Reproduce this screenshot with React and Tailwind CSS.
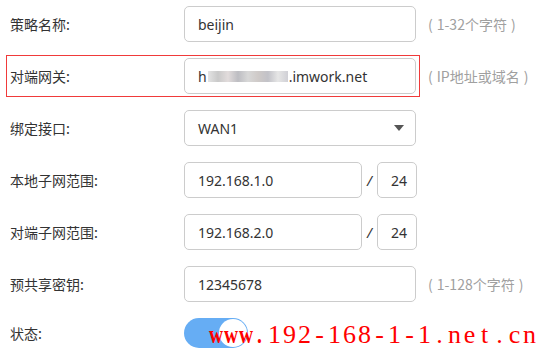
import React from 'react';

const labelCls = "w-[174px] shrink-0 text-[14px] text-[#333] font-['Noto_Sans_CJK_SC',sans-serif]";
const inputCls = "h-9 flex items-center border border-[#ccc] rounded-[5px] bg-white px-[13px] text-[14px] text-[#333] font-['Noto_Sans','Noto_Sans_CJK_SC',sans-serif]";

function Hint({ children, className = 'ml-3' }) {
  return (
    <span className={`${className} flex items-center text-[14px] text-[#a0a0a0] font-['Noto_Sans_CJK_SC',sans-serif]`}>
      <span>(</span>
      <span className="mx-[4px]">{children}</span>
      <span>)</span>
    </span>
  );
}

function Row({ label, children }) {
  return (
    <div className="flex items-center h-9">
      <span className={labelCls}>{label}</span>
      {children}
    </div>
  );
}

function Subnet({ label, ip }) {
  return (
    <Row label={label}>
      <div className={`${inputCls} w-[178px]`}>{ip}</div>
      <span className="w-[15px] text-center text-[14px] text-[#333] italic">/</span>
      <div className={`${inputCls} w-[40px] px-0 pl-[13px]`}>24</div>
    </Row>
  );
}

function Watermark() {
  const bold = 'www.'.split('');
  const rest = '192-168-1-1.net.cn'.split('');
  return (
    <div className="absolute left-[207px] top-[322px] flex text-[26px] leading-none text-[#ff0000] font-['Liberation_Serif',serif] pointer-events-none">
      {bold.map((c, i) => (
        <span key={'b' + i} className="w-[15px] inline-block text-center font-bold scale-x-75">{c}</span>
      ))}
      {rest.map((c, i) => (
        <span key={'r' + i} className="w-[15px] inline-block text-center">{c}</span>
      ))}
    </div>
  );
}

export default function App() {
  return (
    <div className="w-[540px] h-[353px] bg-white relative overflow-hidden">
      <div className="pt-[6px] pl-[10px] flex flex-col gap-4">
        <Row label="策略名称:">
          <div className={`${inputCls} w-[232px]`}>beijin</div>
          <Hint>1-32个字符</Hint>
        </Row>

        <div className="flex items-center">
          <div className="flex items-center -my-[3px] -ml-[4px] pl-[3px] pr-[3px] py-[2px] border border-[#f03a3a]">
            <span className={labelCls}>对端网关:</span>
            <div className={`${inputCls} w-[232px]`}>
              <span>h</span>
              <span className="inline-flex h-[11px] w-[80px] mx-[1px] bg-[linear-gradient(90deg,#e4e4e4,#c9c9c9,#e2dcdc,#bdbdc2,#d8d8d8,#cfcac8,#c2c2c8,#e6e6e6,#d0d0d6)]" />
              <span>.imwork.net</span>
            </div>
          </div>
          <Hint className="ml-[8px]">IP地址或域名</Hint>
        </div>

        <Row label="绑定接口:">
          <div className={`${inputCls} w-[232px] bg-[#f8f8f8] justify-between pr-[11px]`}>
            <span>WAN1</span>
            <svg width="10" height="6" viewBox="0 0 10 6">
              <path d="M0 0 L10 0 L5 6 Z" fill="#555" />
            </svg>
          </div>
        </Row>

        <Subnet label="本地子网范围:" ip="192.168.1.0" />
        <Subnet label="对端子网范围:" ip="192.168.2.0" />

        <Row label="预共享密钥:">
          <div className={`${inputCls} w-[232px]`}>12345678</div>
          <Hint>1-128个字符</Hint>
        </Row>

        <div className="flex items-center h-[30px]">
          <span className={labelCls}>状态:</span>
          <div className="w-16 h-[30px] rounded-full bg-[#66adf4] flex items-center justify-end pr-[1px]">
            <div className="w-[28px] h-[28px] rounded-full bg-white" />
          </div>
        </div>
      </div>
      <Watermark />
    </div>
  );
}
